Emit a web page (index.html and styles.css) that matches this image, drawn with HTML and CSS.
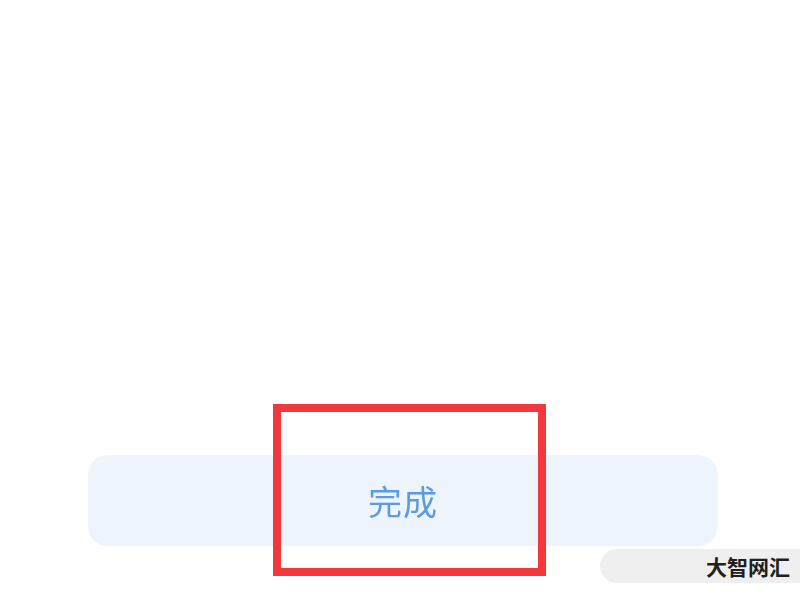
FILE: index.html
```html
<!DOCTYPE html>
<html lang="zh-CN">
<head>
    <meta charset="UTF-8">
    <meta name="viewport" content="width=device-width, initial-scale=1.0">
    <title>完成</title>
    <link rel="stylesheet" href="styles.css">
</head>
<body>
    <div class="screen">
        <div class="actions">
            <button class="done-btn">完成</button>
        </div>

        <!-- highlight frame around the button -->
        <div class="highlight"></div>

        <div class="watermark">大智网汇</div>
    </div>
</body>
</html>
```

FILE: styles.css
```css
body {
    margin: 0;
    padding: 0;
    background-color: #fff;
    font-family: "Noto Sans CJK SC", "Noto Sans", sans-serif;
}

.screen {
    position: relative;
    width: 800px;
    height: 598px;
    overflow: hidden;
    display: flex;
    flex-direction: column;
    justify-content: flex-end;
}

.actions {
    padding: 0 82px 52px 88px;
}

.done-btn {
    display: block;
    width: 100%;
    height: 91px;
    border: none;
    border-radius: 20px;
    background-color: #edf4fc;
    color: #5b9be0;
    font-family: "Noto Sans CJK SC", sans-serif;
    font-size: 34px;
    letter-spacing: 1px;
    filter: blur(0.6px);
}

.highlight {
    position: absolute;
    left: 273px;
    top: 404px;
    width: 273px;
    height: 172px;
    box-sizing: border-box;
    border: 8px solid #f2383d;
}

.watermark {
    position: absolute;
    left: 600px;
    top: 549px;
    width: 220px;
    height: 34px;
    box-sizing: border-box;
    padding-right: 30px;
    border-radius: 17px;
    background-color: #efefef;
    color: #1f1f1f;
    font-size: 21px;
    font-weight: bold;
    line-height: 34px;
    text-align: right;
}
```
